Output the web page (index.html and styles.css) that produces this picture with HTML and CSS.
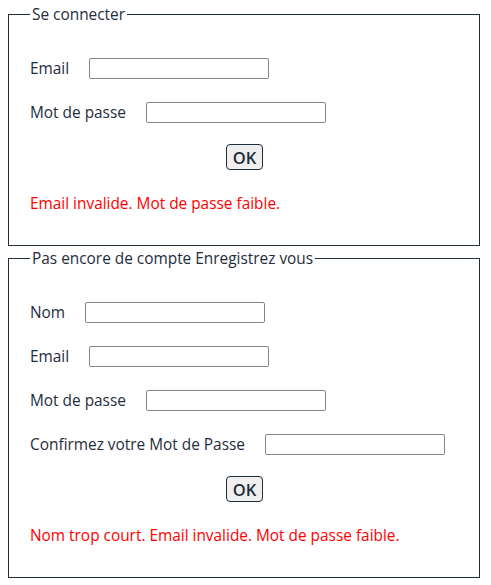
FILE: index.html
```html
<!DOCTYPE html>
<html lang="fr">
<head>
<meta charset="utf-8">
<title>Connexion</title>
<link rel="stylesheet" href="styles.css">
</head>
<body>
<main class="page">
  <fieldset class="box">
    <legend class="box-title">Se connecter</legend>
    <form class="form">
      <div class="fields">
        <div class="row"><label class="lbl">Email</label><input class="field" type="text"></div>
        <div class="row"><label class="lbl">Mot de passe</label><input class="field" type="password"></div>
      </div>
      <div class="actions"><button class="btn" type="button">OK</button></div>
      <p class="error">Email invalide. Mot de passe faible.</p>
    </form>
  </fieldset>
  <fieldset class="box">
    <legend class="box-title">Pas encore de compte Enregistrez vous</legend>
    <form class="form">
      <div class="fields">
        <div class="row"><label class="lbl">Nom</label><input class="field" type="text"></div>
        <div class="row"><label class="lbl">Email</label><input class="field" type="text"></div>
        <div class="row"><label class="lbl">Mot de passe</label><input class="field" type="password"></div>
        <div class="row"><label class="lbl">Confirmez votre Mot de Passe</label><input class="field" type="password"></div>
      </div>
      <div class="actions"><button class="btn" type="button">OK</button></div>
      <p class="error">Nom trop court. Email invalide. Mot de passe faible.</p>
    </form>
  </fieldset>
</main>
</body>
</html>
```

FILE: styles.css
```css
html, body {
  margin: 0;
  padding: 0;
  background: #ffffff;
}
body {
  font-family: "Open Sans", "Noto Sans", sans-serif;
  font-size: 15.4px;
  color: #1f2d3d;
}
.page {
  padding: 5px 11px 0 8px;
  display: flex;
  flex-direction: column;
  gap: 3px;
}
.box {
  margin: 0;
  padding: 0 20px 32px 21px;
  border: 1px solid #1f2d3d;
  min-width: 0;
}
.box-title {
  padding: 0 2px;
  line-height: 19px;
}
.form {
  margin: 0;
  padding-top: 34px;
  display: flex;
  flex-direction: column;
}
.fields {
  display: flex;
  flex-direction: column;
  gap: 23px;
}
.row {
  display: flex;
  align-items: center;
  height: 21px;
}
.lbl {
  margin-right: 20px;
  line-height: 19px;
}
.field {
  box-sizing: border-box;
  width: 180px;
  height: 21px;
  margin: 0;
  border: 1px solid #858592;
  border-radius: 2px;
  background: #fff;
  padding: 0 4px;
}
.actions {
  display: flex;
  justify-content: center;
  margin-top: 21px;
}
.btn {
  box-sizing: border-box;
  width: 37px;
  height: 26px;
  padding: 0;
  border: 1px solid #1f2d3d;
  border-radius: 4px;
  background: #efefef;
  color: #1f2d3d;
  font-family: inherit;
  font-size: 16.5px;
  font-weight: 600;
}
.error {
  margin: 24px 0 0;
  line-height: 19px;
  color: #ff0000;
}
```
